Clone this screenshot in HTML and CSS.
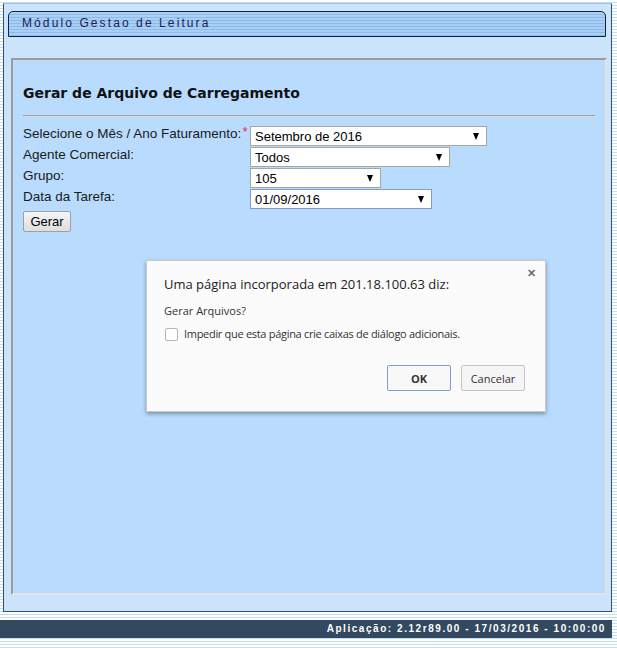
FILE: index.html
```html
<!DOCTYPE html>
<html lang="pt-BR">
<head>
  <meta charset="UTF-8">
  <title>Módulo Gestao de Leitura</title>
  <link rel="stylesheet" href="styles.css">
</head>
<body>

  <div class="moldura">
    <div class="cabecalho">Módulo Gestao de Leitura</div>

    <div class="painel">
      <h1 class="titulo">Gerar de Arquivo de Carregamento</h1>
      <hr class="linha">

      <div class="linha-form">
        <label class="rotulo">Selecione o Mês / Ano Faturamento:<span class="obrig">*</span></label>
        <span class="combo" style="width: 237px;">
          <select><option>Setembro de 2016</option></select>
        </span>
      </div>
      <div class="linha-form">
        <label class="rotulo">Agente Comercial:</label>
        <span class="combo" style="width: 200px;">
          <select><option>Todos</option></select>
        </span>
      </div>
      <div class="linha-form">
        <label class="rotulo">Grupo:</label>
        <span class="combo" style="width: 131px;">
          <select><option>105</option></select>
        </span>
      </div>
      <div class="linha-form">
        <label class="rotulo">Data da Tarefa:</label>
        <span class="combo foco" style="width: 182px;">
          <select><option>01/09/2016</option></select>
        </span>
      </div>

      <button class="botao-gerar">Gerar</button>
    </div>
  </div>

  <div class="rodape">Aplicação: 2.12r89.00 - 17/03/2016 - 10:00:00</div>

  <!-- caixa de confirmacao do navegador -->
  <div class="dialogo">
    <span class="fechar">&#x2715;</span>
    <div class="dlg-titulo">Uma página incorporada em 201.18.100.63 diz:</div>
    <div class="dlg-msg">Gerar Arquivos?</div>
    <div class="dlg-check"><span class="caixa"></span>Impedir que esta página crie caixas de diálogo adicionais.</div>
    <div class="dlg-botoes">
      <button class="btn-ok">OK</button>
      <button class="btn-cancelar">Cancelar</button>
    </div>
  </div>

</body>
</html>
```

FILE: styles.css
```css
body {
  margin: 0;
  min-height: 648px;
  background: repeating-linear-gradient(#ffffff 0 2px, #c3def3 2px 3px);
  font-family: "Liberation Sans", Arial, sans-serif;
  position: relative;
}

/* moldura principal */
.moldura {
  width: 607px;
  margin: 3px 0 0 3px;
  background-color: #cce4fb;
  border: 1px solid #33506e;
  border-top-color: #9fc3e6;
  padding-top: 7px;
  padding-bottom: 16px;
}

.cabecalho {
  height: 24px;
  margin-left: 4px;
  border: 1px solid #16233d;
  border-radius: 5px 5px 0 0;
  background: repeating-linear-gradient(#a9cff5 0 2px, #8cbbeb 2px 3px);
  color: #1b1b55;
  font-size: 12px;
  letter-spacing: 2.1px;
  line-height: 22px;
  padding-left: 13px;
  width: 583px;
}

.painel {
  width: 572px;
  height: 533px;
  margin: 21px 0 0 7px;
  padding: 0 10px;
  background-color: #b9dcfe;
  border: 2px solid;
  border-color: #9c9c9c #e3e3e3 #e3e3e3 #9c9c9c;
}

.titulo {
  margin: 25px 0 0 0;
  font-family: "DejaVu Sans", Verdana, sans-serif;
  font-size: 14px;
  line-height: 17px;
  color: #111;
}

.linha {
  margin: 13px 0 9px 0;
  border: 0;
  border-top: 1px solid #a3a3a3;
  border-bottom: 1px solid #dcdcdc;
  height: 0;
}

/* linhas do formulario */
.linha-form {
  display: flex;
  align-items: flex-start;
  height: 21px;
}

.rotulo {
  width: 227px;
  font-size: 13.5px;
  line-height: 15px;
  color: #1a1a1a;
  white-space: nowrap;
}

.obrig {
  color: #e0303a;
  position: relative;
  top: -2px;
  margin-left: 1px;
}

.combo {
  position: relative;
  display: block;
  height: 20px;
}

.combo select {
  appearance: none;
  -webkit-appearance: none;
  width: 100%;
  height: 20px;
  margin: 0;
  padding: 0 0 0 4px;
  border: 1px solid #a6a6a6;
  border-radius: 0;
  background: #ffffff;
  font-family: "Liberation Sans", Arial, sans-serif;
  font-size: 13px;
  color: #000;
}

.combo.foco select {
  border-color: #7d9fcc;
}

.combo::after {
  content: "";
  position: absolute;
  right: 8px;
  top: 7px;
  border-left: 3.5px solid transparent;
  border-right: 3.5px solid transparent;
  border-top: 7px solid #000;
  pointer-events: none;
}

.botao-gerar {
  margin-top: 1px;
  width: 48px;
  height: 21px;
  padding: 0;
  border: 1px solid #a0a0a0;
  border-radius: 2px;
  background: linear-gradient(#f6f6f6, #dedede);
  font-family: "Liberation Sans", Arial, sans-serif;
  font-size: 13px;
  color: #000;
}

/* rodape */
.rodape {
  width: 606px;
  height: 18px;
  margin-top: 8px;
  padding-right: 6px;
  background-color: #324960;
  color: #ffffff;
  font-size: 10px;
  font-weight: bold;
  letter-spacing: 1.55px;
  line-height: 18px;
  text-align: right;
}

/* dialogo de confirmacao */
.dialogo {
  position: absolute;
  left: 146px;
  top: 260px;
  width: 400px;
  height: 152px;
  padding: 13px 0 0 17px;
  box-sizing: border-box;
  background-color: #fbfbfb;
  border: 1px solid #c9c9c9;
  box-shadow: 0 2px 4px rgba(0, 0, 0, 0.35);
  font-family: "Open Sans", "Noto Sans", sans-serif;
  color: #333;
}

.fechar {
  position: absolute;
  right: 9px;
  top: 4px;
  font-size: 11px;
  color: #6f6f6f;
  font-weight: bold;
}

.dlg-titulo {
  font-size: 13px;
  line-height: 20px;
  color: #222;
}

.dlg-msg {
  margin-top: 9px;
  font-size: 11px;
  line-height: 16px;
}

.dlg-check {
  margin-top: 7px;
  display: flex;
  align-items: center;
  font-size: 11px;
  letter-spacing: -0.3px;
  line-height: 16px;
}

.caixa {
  width: 11px;
  height: 11px;
  margin: 0 6px 0 1px;
  border: 1px solid #b5b5b5;
  border-radius: 2px;
  background: #fff;
}

.dlg-botoes {
  display: flex;
  justify-content: flex-end;
  gap: 10px;
  margin-top: 23px;
  padding-right: 20px;
}

.dlg-botoes button {
  width: 64px;
  height: 26px;
  padding: 0;
  border-radius: 2px;
  font-family: "Open Sans", "Noto Sans", sans-serif;
  font-size: 11px;
  color: #333;
}

.btn-ok {
  border: 1px solid #7c9fd6;
  background: #f8f8f8;
  font-weight: bold;
}

.btn-cancelar {
  border: 1px solid #c4c4c4;
  background: #f5f5f5;
}
```
